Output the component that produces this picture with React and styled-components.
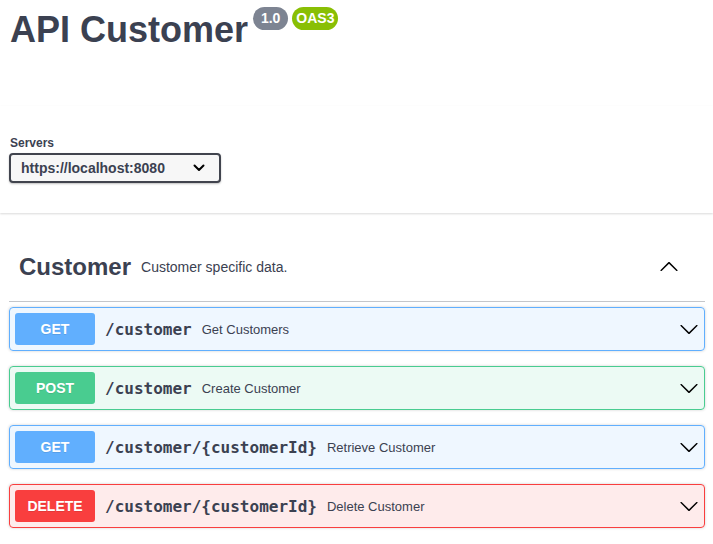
import React from "react";
import styled, { createGlobalStyle } from "styled-components";

const Global = createGlobalStyle`
  html, body { margin: 0; padding: 0; background: #fff; }
  body { font-family: "Liberation Sans", Arial, sans-serif; color: #3b4151; }
  * { box-sizing: border-box; }
`;

const Wrapper = styled.div`
  padding: 0 8px 0 9px;
`;

const InfoHeader = styled.div`
  height: 106px;
  padding: 7px 0 0 1px;
  display: flex;
  align-items: flex-start;
`;

const Title = styled.h2`
  margin: 2px 0 0;
  font-size: 36px;
  line-height: 42px;
  font-weight: 700;
  color: #3b4151;
`;

const Badge = styled.small`
  margin-left: ${(p) => p.$ml}px;
  background: ${(p) => p.$bg};
  border-radius: 57px;
  padding: 2px 4px;
  font-size: 14px;
  line-height: 19px;
  font-weight: 700;
  color: #fff;
  white-space: pre;
`;

const SchemeContainer = styled.section`
  background: #fff;
  box-shadow: 0 1px 2px 0 rgba(0, 0, 0, 0.15);
  padding: 30px 0;
`;

const ServersTitle = styled.div`
  font-size: 12px;
  line-height: 14px;
  font-weight: 700;
  margin: 0 0 3px 1px;
`;

const Select = styled.div`
  display: inline-flex;
  align-items: center;
  justify-content: space-between;
  width: 212px;
  height: 30px;
  padding: 5px 14px 5px 10px;
  border: 2px solid #41444e;
  border-radius: 4px;
  background: #f7f7f7;
  box-shadow: 0 1px 2px 0 rgba(0, 0, 0, 0.25);
  font-size: 14px;
  font-weight: 700;
  color: #3b4151;
`;

const TagSection = styled.div`
  margin-top: 20px;
`;

const TagHeading = styled.h3`
  display: flex;
  align-items: center;
  margin: 0 0 5px;
  height: 69px;
  padding: 10px 26px 10px 10px;
  border-bottom: 1px solid rgba(59, 65, 81, 0.3);
  font-size: 24px;
  font-weight: 700;
  color: #3b4151;
`;

const TagDesc = styled.small`
  flex: 1;
  padding: 0 10px;
  font-size: 14px;
  font-weight: 400;
  color: #3b4151;
`;

const Chevron = styled.svg`
  width: 20px;
  height: 20px;
  flex: none;
  fill: #000;
`;

const methodColors = {
  GET: "97,175,254",
  POST: "73,204,144",
  DELETE: "249,62,62",
};

const Opblock = styled.div`
  display: flex;
  align-items: center;
  margin: 0 0 15px;
  padding: 5px;
  border: 1px solid rgb(${(p) => p.$rgb});
  background: rgba(${(p) => p.$rgb}, 0.1);
  border-radius: 4px;
  box-shadow: 0 0 3px rgba(0, 0, 0, 0.19);
`;

const Method = styled.span`
  min-width: 80px;
  padding: 6px 0;
  line-height: 20px;
  font-size: 14px;
  font-weight: 700;
  text-align: center;
  color: #fff;
  border-radius: 3px;
  background: rgb(${(p) => p.$rgb});
  text-shadow: 0 1px 0 rgba(0, 0, 0, 0.1);
`;

const Path = styled.span`
  padding: 0 10px;
  font-family: "DejaVu Sans Mono", monospace;
  font-weight: 700;
  font-size: 16px;
  color: #3b4151;
`;

const Summary = styled.span`
  flex: 1;
  font-size: 13px;
  color: #3b4151;
`;

const downPath =
  "M17.418 6.109c.272-.268.709-.268.979 0s.271.701 0 .969l-7.908 7.83c-.27.268-.707.268-.979 0l-7.908-7.83c-.27-.268-.27-.701 0-.969.271-.268.709-.268.979 0L10 13.25l7.418-7.141z";

const ops = [
  { m: "GET", path: "/customer", sum: "Get Customers" },
  { m: "POST", path: "/customer", sum: "Create Customer" },
  { m: "GET", path: "/customer/{customerId}", sum: "Retrieve Customer" },
  { m: "DELETE", path: "/customer/{customerId}", sum: "Delete Customer" },
];

export default function App() {
  return (
    <>
      <Global />
      <Wrapper>
        <InfoHeader>
          <Title>API Customer</Title>
          <Badge $bg="#7d8492" $ml={5}>{" 1.0 "}</Badge>
          <Badge $bg="#89bf04" $ml={4}>OAS3</Badge>
        </InfoHeader>
      </Wrapper>
      <SchemeContainer>
        <Wrapper>
          <ServersTitle>Servers</ServersTitle>
          <Select>
            <span>https://localhost:8080</span>
            <svg width="12" height="8" viewBox="0 0 12 8">
              <polyline points="1.5,1.5 6,6 10.5,1.5" fill="none" stroke="#000" strokeWidth="2" strokeLinecap="round" strokeLinejoin="round" />
            </svg>
          </Select>
        </Wrapper>
      </SchemeContainer>
      <Wrapper>
        <TagSection>
          <TagHeading>
            <span>Customer</span>
            <TagDesc>Customer specific data.</TagDesc>
            <Chevron viewBox="0 0 20 20" style={{ transform: "rotate(180deg)" }}>
              <path d={downPath} />
            </Chevron>
          </TagHeading>
          {ops.map((o, i) => (
            <Opblock key={i} $rgb={methodColors[o.m]}>
              <Method $rgb={methodColors[o.m]}>{o.m}</Method>
              <Path>{o.path}</Path>
              <Summary>{o.sum}</Summary>
              <Chevron viewBox="0 0 20 20">
                <path d={downPath} />
              </Chevron>
            </Opblock>
          ))}
        </TagSection>
      </Wrapper>
    </>
  );
}
